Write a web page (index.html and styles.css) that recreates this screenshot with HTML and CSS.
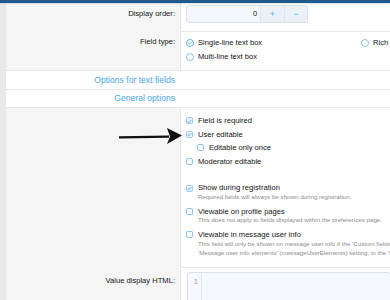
FILE: index.html
```html
<!DOCTYPE html>
<html lang="en">
<head>
    <meta charset="UTF-8">
    <meta name="viewport" content="width=device-width, initial-scale=1.0">
    <title>Edit custom user field</title>
    <link rel="stylesheet" href="styles.css">
</head>
<body>
    <div class="topbar"></div>
    <div class="form">
        <div class="row row-first">
            <div class="label label-tall">Display order:</div>
            <div class="value value-first">
                <div class="spinner">
                    <div class="spinner-input">0</div>
                    <div class="spinner-btn">+</div>
                    <div class="spinner-btn">&minus;</div>
                </div>
            </div>
        </div>

        <div class="row">
            <div class="label label-radio">Field type:</div>
            <div class="value value-radio">
                <div class="radio-col">
                    <div class="choice">
                        <span class="radio checked">
                            <svg viewBox="0 0 8 8" width="8" height="8"><circle cx="4" cy="4" r="3.5" fill="none" stroke="#47a7eb" stroke-width="0.9"/><path d="M2.3 4.1 L3.5 5.2 L5.8 2.8" fill="none" stroke="#47a7eb" stroke-width="0.9"/></svg>
                        </span>
                        Single-line text box
                    </div>
                    <div class="choice">
                        <span class="radio"><svg viewBox="0 0 8 8" width="8" height="8"><circle cx="4" cy="4" r="3.5" fill="none" stroke="#7db9e8" stroke-width="0.9"/></svg></span>
                        Multi-line text box
                    </div>
                </div>
                <div class="radio-col">
                    <div class="choice">
                        <span class="radio"><svg viewBox="0 0 8 8" width="8" height="8"><circle cx="4" cy="4" r="3.5" fill="none" stroke="#7db9e8" stroke-width="0.9"/></svg></span>
                        Rich text box
                    </div>
                </div>
            </div>
        </div>

        <div class="form-header">
            <div class="header-text">Options for text fields</div>
        </div>
        <div class="form-header header-last">
            <div class="header-text header-second">General options</div>
        </div>

        <div class="row">
            <div class="label"></div>
            <div class="value value-checks">
                <div class="choice"><span class="box checked"><svg viewBox="0 0 7 7" width="7" height="7"><path d="M1.6 3.6 L2.9 4.8 L5.3 2.2" fill="none" stroke="#47a7eb" stroke-width="0.9"/></svg></span>Field is required</div>
                <div class="choice"><span class="box checked"><svg viewBox="0 0 7 7" width="7" height="7"><path d="M1.6 3.6 L2.9 4.8 L5.3 2.2" fill="none" stroke="#47a7eb" stroke-width="0.9"/></svg></span>User editable</div>
                <div class="choice nested"><span class="box"></span>Editable only once</div>
                <div class="choice"><span class="box"></span>Moderator editable</div>

                <div class="group">
                    <div class="choice"><span class="box checked"><svg viewBox="0 0 7 7" width="7" height="7"><path d="M1.6 3.6 L2.9 4.8 L5.3 2.2" fill="none" stroke="#47a7eb" stroke-width="0.9"/></svg></span>Show during registration</div>
                    <div class="hint">Required fields will always be shown during registration.</div>

                    <div class="choice spaced"><span class="box"></span>Viewable on profile pages</div>
                    <div class="hint">This does not apply to fields displayed within the preferences page.</div>

                    <div class="choice spaced"><span class="box"></span>Viewable in message user info</div>
                    <div class="hint">This field will only be shown on message user info if the 'Custom fields' option is enabled in the<br>'Message user info elements' (messageUserElements) setting, in the 'Messages' options.</div>
                </div>
            </div>
        </div>

        <div class="row">
            <div class="label label-code">Value display HTML:</div>
            <div class="value value-code">
                <div class="code-editor">
                    <div class="code-gutter">1</div>
                    <div class="code-body"></div>
                </div>
            </div>
        </div>
    </div>

    <!-- annotation arrow -->
    <svg class="arrow" width="70" height="22" viewBox="0 0 70 22">
        <path d="M4 12.3 L54 11.6" stroke="#111" stroke-width="2.2" fill="none"/>
        <polygon points="52,3 67,10.5 52,19 55,11.8" fill="#111"/>
    </svg>
</body>
</html>
```

FILE: styles.css
```css
body {
    margin: 0;
    background: #e9e9e9;
    font-family: "Liberation Sans", Arial, sans-serif;
    font-size: 7.6px;
    color: #141414;
    overflow: hidden;
    height: 300px;
    position: relative;
}
.topbar {
    height: 3px;
    background: #1f5a8e;
    box-shadow: 0 1px 1px rgba(0,0,0,0.12);
    position: relative;
}
.form {
    margin-left: 6px;
    background: #f5f5f5;
    height: 297px;
}
.row {
    display: grid;
    grid-template-columns: 174px 1fr;
}
.label {
    background: #f5f5f5;
    text-align: right;
    padding-right: 5px;
    line-height: 13.6px;
}
.label-tall {
    padding-top: 2px;
    line-height: 18px;
}
.label-radio {
    padding-top: 4px;
    line-height: 14px;
}
.label-code {
    padding-top: 7px;
}
.value {
    background: #fff;
    border-left: 1px solid #e4e4e4;
    border-top: 1px solid #e7e7e7;
    padding-left: 5px;
    white-space: nowrap;
    overflow: hidden;
}
.value-first {
    border-top: none;
    padding-top: 2px;
    padding-bottom: 8px;
}
.spinner {
    display: flex;
    width: 122px;
    height: 18px;
    box-sizing: border-box;
    border: 1px solid #d8e1ea;
    border-radius: 3px;
    background: #f3f7fb;
    overflow: hidden;
}
.spinner-input {
    width: 75px;
    text-align: right;
    padding-right: 3px;
    box-sizing: border-box;
    line-height: 16px;
}
.spinner-btn {
    width: 23px;
    border-left: 1px solid #dfe6ee;
    background: #eaf1f8;
    color: #5aaee9;
    text-align: center;
    line-height: 16px;
    font-size: 9px;
}
.value-radio {
    display: flex;
    padding-top: 4px;
    padding-bottom: 6px;
}
.radio-col {
    width: 175px;
    flex-shrink: 0;
}
.value-radio .choice {
    line-height: 14px;
}
.choice {
    display: flex;
    align-items: center;
    line-height: 13.6px;
}
.radio {
    display: flex;
    width: 8px;
    height: 8px;
    margin-right: 4px;
}
.box {
    display: flex;
    width: 7px;
    height: 7px;
    box-sizing: border-box;
    border: 0.8px solid #8fc3ec;
    border-radius: 1.5px;
    background: #f4f9fd;
    margin-right: 5px;
    flex-shrink: 0;
}
.box.checked {
    border-color: #9ccbef;
    background: #e6f1fb;
}
.box svg {
    margin: -0.8px;
}
.nested {
    margin-left: 11px;
}
.form-header {
    background: #fff;
    border-top: 1px solid #e5e5e5;
}
.header-last {
    border-bottom: 1px solid #e5e5e5;
}
.header-text {
    width: 169px;
    text-align: right;
    color: #47a7eb;
    font-size: 8.6px;
    line-height: 18px;
}
.header-second {
    line-height: 17px;
}
.value-checks {
    border-top: none;
    padding-top: 6px;
    padding-bottom: 10px;
}
.group {
    margin-top: 13px;
}
.spaced {
    margin-top: 3.7px;
}
.hint {
    color: #8c8c8c;
    font-size: 6.2px;
    line-height: 9px;
    margin-top: -3px;
    margin-left: 12px;
}
.value-code {
    padding-top: 4px;
    padding-left: 6px;
    height: 40px;
}
.code-editor {
    display: flex;
    height: 40px;
    border: 1px solid #d8e0e8;
    border-radius: 3px;
    border-right: none;
    background: #f5f9fd;
}
.code-gutter {
    width: 14px;
    border-right: 1px solid #dfe5ec;
    text-align: right;
    padding-right: 3px;
    box-sizing: border-box;
    color: #9a9a9a;
    line-height: 16px;
    padding-top: 1px;
}
.code-body {
    flex: 1;
}
.arrow {
    position: absolute;
    left: 115px;
    top: 125px;
}
```
